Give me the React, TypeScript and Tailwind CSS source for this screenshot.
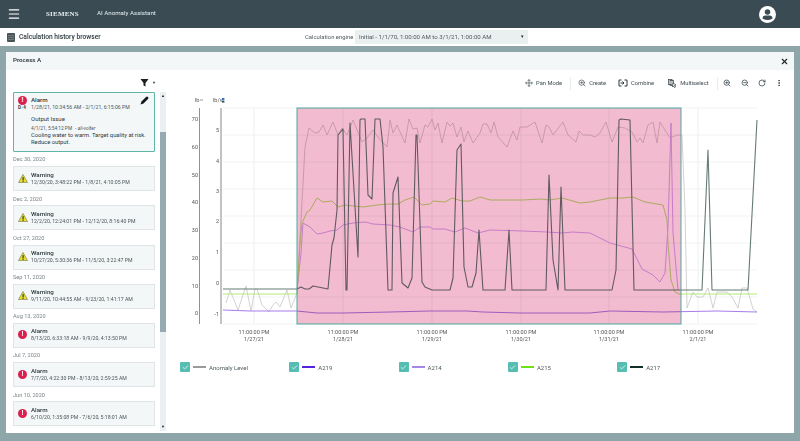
import { Move, ZoomIn, ZoomOut, RotateCw, MoreVertical, X, Check, Menu } from "lucide-react";

// chart points are traced in page coordinates, the svg viewBox is offset to match
const anomaly = "226,303 230,290 238,310 246,286 251,311 255,289 257,289 262,305 269,312 273,305 276,302 280,307 287,290 291,308 297,293 305,147 309,128 315,133 319,132 323,125 327,135 333,122 338,135 342,128 347,135 353,120 362,142 367,138 373,130 378,137 387,147 390,120 393,133 397,125 405,143 409,119 413,129 417,128 420,143 425,125 428,127 432,119 435,130 438,123 442,143 447,122 450,126 453,123 457,137 461,127 464,142 468,131 473,143 480,133 483,124 487,124 491,133 494,122 498,137 507,147 513,131 517,140 520,127 527,127 535,122 542,143 546,125 549,127 553,135 563,122 568,135 576,142 579,131 583,135 590,135 595,137 600,133 606,122 612,142 618,127 625,128 632,132 637,142 640,138 643,143 648,125 653,122 657,143 660,122 665,130 670,138 677,135 682,135 685,210 687,308 693,292 697,297 703,297 708,288 713,308 717,292 727,292 732,297 738,308 742,288 747,288 753,309 757,312";
const a215 = "223,294 297,294 300,243 302,223 307,212 310,210 317,198 323,202 332,201 338,207 345,205 363,207 377,205 390,204 398,204 405,200 414,197 422,205 430,204 433,201 445,202 452,198 462,201 470,201 480,197 490,200 523,200 540,199 550,200 562,198 580,203 590,202 600,200 610,198 623,198 633,197 645,202 663,205 667,220 668,243 671,280 675,292 679,294 757,294";
const a217 = "223,289 297,289 301,287 305,289 309,289 313,286 318,287 328,289 332,245 334,238 337,210 338,135 343,129 346,290 347,290 350,123 358,257 360,120 361,119 365,119 368,195 372,199 375,119 380,119 383,147 388,290 392,290 393,193 398,177 402,283 408,288 412,278 416,135 417,135 422,282 425,287 432,290 450,290 453,278 457,150 461,144 464,267 468,287 472,287 476,273 479,230 483,290 505,290 509,230 512,290 546,290 549,175 553,260 558,290 561,187 565,290 612,290 616,270 619,120 621,119 630,120 634,290 702,290 708,150 712,290 748,290 757,120";
const a214 = "297,290 301,253 303,223 310,227 317,234 323,233 330,231 337,230 343,225 353,223 365,222 373,224 390,225 400,227 413,232 420,227 430,227 433,229 445,229 455,232 465,228 478,233 490,230 523,231 547,232 563,233 572,232 590,233 600,238 610,243 632,249 642,269 653,275 660,282 665,273 668,227 671,123 673,233 678,290";
const a219 = "223,310 250,311 297,311 317,313 343,313 390,312 430,311 467,311 483,312 520,313 590,313 610,311 663,312 717,311 757,312";

const leftTicks: [string, number][] = [["70", 119], ["60", 147], ["50", 175], ["40", 202], ["30", 230], ["20", 258], ["10", 286], ["0", 313]];
const rightTicks: [string, number][] = [["5", 130], ["4", 161], ["3", 191], ["2", 221], ["1", 252], ["0", 283], ["-1", 314]];
const gridY = [108, 135, 162, 189, 216, 243, 270, 297, 324];
const days: [number, string][] = [[254, "1/27/21"], [343, "1/28/21"], [432, "1/29/21"], [521, "1/30/21"], [609, "1/31/21"], [698, "2/1/21"]];

const events = [
  { date: "Dec 30, 2020", kind: "Warning", range: "12/30/20, 3:48:22 PM - 1/8/21, 4:10:05 PM" },
  { date: "Dec 2, 2020", kind: "Warning", range: "12/2/20, 12:24:01 PM - 12/12/20, 8:16:40 PM" },
  { date: "Oct 27, 2020", kind: "Warning", range: "10/27/20, 5:30:36 PM - 11/5/20, 3:22:47 PM" },
  { date: "Sep 11, 2020", kind: "Warning", range: "9/11/20, 10:44:55 AM - 9/23/20, 1:41:17 AM" },
  { date: "Aug 13, 2020", kind: "Alarm", range: "8/13/20, 6:33:18 AM - 9/9/20, 4:13:50 PM" },
  { date: "Jul 7, 2020", kind: "Alarm", range: "7/7/20, 4:22:30 PM - 8/13/20, 2:59:25 AM" },
  { date: "Jun 10, 2020", kind: "Alarm", range: "6/10/20, 1:35:08 PM - 7/6/20, 5:18:01 AM" },
];

const legend = [
  { name: "Anomaly Level", color: "bg-[#9a9a9a]" },
  { name: "A219", color: "bg-[#5522dd]" },
  { name: "A214", color: "bg-[#a488e8]" },
  { name: "A215", color: "bg-[#6fe011]" },
  { name: "A217", color: "bg-[#123029]" },
];

function AlarmIcon() {
  return (
    <div className="flex h-[9px] w-[9px] items-center justify-center rounded-full bg-[#d9204f] text-[7px] leading-none font-bold text-white">
      !
    </div>
  );
}

function WarningIcon() {
  return (
    <svg width="10" height="9" viewBox="0 0 22 20">
      <path d="M11 1 L21 19 L1 19 Z" fill="#e8e030" stroke="#4a4a28" strokeWidth="1" />
      <rect x="10" y="7" width="2.4" height="7" fill="#222" />
      <rect x="10" y="15" width="2.4" height="2.4" fill="#222" />
    </svg>
  );
}

function Chart() {
  const line = (pts: string, color: string, w: number) => (
    <polyline points={pts} fill="none" stroke={color} strokeWidth={w} strokeLinejoin="round" />
  );
  return (
    <svg width="600" height="253" viewBox="170 92 600 253" className="shrink-0">
      {gridY.map((y) => (
        <line key={y} x1="223" x2="757" y1={y} y2={y} stroke="#edf1f1" strokeWidth="0.8" />
      ))}
      {days.map(([x]) => (
        <line key={x} x1={x} x2={x} y1="108" y2="324" stroke="#e9eeee" strokeWidth="0.8" />
      ))}
      {line(anomaly, "#c6c6c6", 0.8)}
      {line(a219, "#a87cec", 1)}
      {line(a214, "#d0aaf6", 1)}
      {line(a215, "#b4e874", 1)}
      {line(a217, "#667a78", 1.1)}
      <rect x="297" y="108" width="384" height="216" fill="#f3bbcf" className="mix-blend-multiply" />
      <rect x="297" y="108" width="384" height="216" fill="none" stroke="#4fa9a0" strokeWidth="1" />
      <line x1="199.5" x2="199.5" y1="108" y2="324" stroke="#707878" strokeWidth="0.8" />
      <line x1="221" x2="221" y1="108" y2="324" stroke="#808888" strokeWidth="1" />
      <g fontSize="5.5" fill="#555" fontFamily="Roboto, sans-serif">
        <text x="195" y="102">lb~</text>
        <text x="213" y="102">lb/v</text>
        {leftTicks.map(([t, y]) => (
          <text key={t} x="198" y={y + 2} textAnchor="end">{t}</text>
        ))}
        {rightTicks.map(([t, y]) => (
          <text key={t} x="219" y={y + 2} textAnchor="end">{t}</text>
        ))}
        {days.map(([x, d]) => (
          <g key={x}>
            <text x={x} y="334" textAnchor="middle">11:00:00 PM</text>
            <text x={x} y="340.5" textAnchor="middle">{d}</text>
          </g>
        ))}
      </g>
      <rect x="222" y="98" width="2.4" height="2" fill="#2f6fd0" />
      <rect x="222" y="100.6" width="2.4" height="2" fill="#3c4c50" />
    </svg>
  );
}

function ToolButton({ icon, label }: { icon: React.ReactNode; label: string }) {
  return (
    <div className="flex items-center gap-[3px] text-[5.8px] whitespace-nowrap text-[#3e4c50]">
      {icon}
      <span>{label}</span>
    </div>
  );
}

export default function App() {
  return (
    <div className="flex h-[441px] w-[800px] flex-col overflow-hidden bg-[#8ea5aa] font-['Roboto',sans-serif] text-[#2d3a3e]">
      <header className="flex h-[28px] shrink-0 items-center bg-[#3a4b54] pr-[24px] pl-[7px] text-white">
        <Menu size={14} strokeWidth={2} />
        <span className="ml-[25px] font-['Liberation_Serif',serif] text-[7px] font-bold tracking-[0.2px] text-[#e4eef0]">SIEMENS</span>
        <span className="ml-[18px] text-[6.2px] text-[#e4eef0]">AI Anomaly Assistant</span>
        <svg className="ml-auto" width="17" height="17" viewBox="0 0 34 34">
          <circle cx="17" cy="17" r="17" fill="#fff" />
          <circle cx="17" cy="12" r="5.5" fill="#3a4b54" />
          <path d="M7 25 Q7 19 13 19 H21 Q27 19 27 25 Q17 31 7 25 Z" fill="#3a4b54" />
        </svg>
      </header>

      <div className="flex h-[18px] shrink-0 items-center bg-white pl-[7px]">
        <svg width="8" height="9" viewBox="0 0 8 9">
          <rect width="8" height="9" rx="1" fill="#4a5558" />
          <rect x="1" y="2" width="6" height="0.6" fill="#8a9498" />
          <rect x="1" y="4" width="6" height="0.6" fill="#8a9498" />
          <rect x="1" y="6" width="6" height="0.6" fill="#8a9498" />
        </svg>
        <span className="ml-[4px] w-[80px] text-[6.7px] font-medium whitespace-nowrap">Calculation history browser</span>
        <span className="ml-[206px] w-[48px] text-[5.9px] whitespace-nowrap text-[#4d5a5e]">Calculation engine</span>
        <div className="ml-[2px] flex h-[14px] w-[173px] items-center justify-between bg-[#eaf0f0] pr-[4px] pl-[4px] text-[6.1px] text-[#4d5a5e]">
          <span>Initial - 1/1/70, 1:00:00 AM to 3/1/21, 1:00:00 AM</span>
          <span className="text-[5px] text-[#222]">▾</span>
        </div>
      </div>

      <main className="mx-[6px] mt-[6px] flex h-[381px] flex-col bg-white">
        <div className="flex h-[18px] shrink-0 items-center justify-between bg-[#f3f7f8] pr-[5px] pl-[7px]">
          <span className="text-[6.2px] font-semibold">Process A</span>
          <X size={9} strokeWidth={3} className="text-[#1d2528]" />
        </div>

        <div className="flex min-h-0 flex-1">
          <aside className="flex w-[164px] shrink-0 flex-col pl-[7px]">
            <div className="flex h-[22px] shrink-0 items-center pt-[3px] pl-[127px]">
              <svg width="9" height="9" viewBox="0 0 18 18">
                <path d="M1 2 H17 L11 10 V17 L7 15 V10 Z" fill="#1c2224" />
              </svg>
              <span className="ml-[3px] text-[4px]">▼</span>
            </div>
            <div className="flex min-h-0">
              <div className="w-[142px] shrink-0">
                <div className="relative h-[60px] rounded-[1px] border border-[#5db5a6] bg-[#f4f7f8] pt-[3px] pl-[4px]">
                  <div className="flex">
                    <div className="flex w-[13px] shrink-0 flex-col">
                      <AlarmIcon />
                      <span className="mt-[1px] text-[4.5px] leading-none font-bold">D↑4</span>
                    </div>
                    <div>
                      <div className="text-[6.2px] leading-[8px] font-medium">Alarm</div>
                      <div className="text-[5.2px] leading-[6px] text-[#4a565a]">1/28/21, 10:34:56 AM - 2/1/21, 6:15:06 PM</div>
                      <div className="mt-[5px] text-[6px] leading-[7px]">Output Issue</div>
                      <div className="mt-[4px] text-[4.8px] leading-[6px] text-[#4a565a]">
                        4/1/21, 5:54:12 PM <span className="ml-[2px] italic">- ali-volter</span>
                      </div>
                      <div className="w-[122px] text-[5.8px] leading-[7px]">
                        Cooling water to warm. Target quality at risk. Reduce output.
                      </div>
                    </div>
                  </div>
                  <svg className="absolute top-[3px] right-[5px]" width="9" height="9" viewBox="0 0 18 18">
                    <path d="M1 17 L3 11 L12 2 Q14 0 16 2 Q18 4 16 6 L7 15 Z" fill="#15191b" />
                  </svg>
                </div>
                {events.map((e) => (
                  <div key={e.date}>
                    <div className="flex h-[14.2px] items-center pt-[1px] text-[5.6px] text-[#7b868a]">{e.date}</div>
                    <div className="flex h-[25px] items-center border border-[#dfe5e6] bg-[#f4f7f8] pb-[1px] pl-[4px]">
                      <div className="flex w-[13px] shrink-0">
                        {e.kind === "Alarm" ? <AlarmIcon /> : <WarningIcon />}
                      </div>
                      <div>
                        <div className="text-[6.2px] leading-[8px] font-medium">{e.kind}</div>
                        <div className="text-[5.2px] leading-[7px] text-[#4a565a]">{e.range}</div>
                      </div>
                    </div>
                  </div>
                ))}
              </div>
              <div className="ml-[5px] flex h-[339px] w-[6px] shrink-0 flex-col bg-[#eaf0f1] text-center text-[4px] leading-[8px] text-[#222]">
                <span className="h-[40px]">▲</span>
                <div className="h-[200px] bg-[#96abb0]" />
                <span className="mt-auto">▼</span>
              </div>
            </div>
          </aside>

          <section className="flex min-w-0 flex-1 flex-col">
            <div className="flex h-[22px] shrink-0 items-center pt-[4px] pl-[355px] text-[#3e4c50]">
              <ToolButton icon={<Move size={8} />} label="Pan Mode" />
              <div className="mr-[7px] ml-[8px] h-[13px] w-px bg-[#e8ecec]" />
              <ToolButton icon={<ZoomIn size={8} />} label="Create" />
              <div className="ml-[12px]">
                <ToolButton
                  icon={
                    <svg width="10" height="8" viewBox="0 0 20 16" fill="none" stroke="#2e3a3e" strokeWidth="2">
                      <path d="M7 2 H2 V14 H7 M13 2 H18 V14 H13 M5 8 H11 M9 5 L12 8 L9 11" />
                    </svg>
                  }
                  label="Combine"
                />
              </div>
              <div className="ml-[14px]">
                <ToolButton
                  icon={
                    <svg width="9" height="9" viewBox="0 0 18 18" fill="none" stroke="#2e3a3e" strokeWidth="1.4">
                      <rect x="1" y="1" width="7" height="10" />
                      <rect x="4" y="3" width="7" height="10" />
                      <path d="M10 8 L16 12 L13 13 L15 16 L13 17 L11 14 L9 16 Z" fill="#fff" />
                    </svg>
                  }
                  label="Multiselect"
                />
              </div>
              <div className="mr-[5px] ml-[8px] h-[13px] w-px bg-[#e8ecec]" />
              <ZoomIn size={8} strokeWidth={2.4} />
              <ZoomOut size={8} strokeWidth={2.4} className="ml-[10px]" />
              <RotateCw size={8} strokeWidth={2.4} className="ml-[9px]" />
              <MoreVertical size={8} strokeWidth={3} className="ml-[9px]" />
            </div>
            <Chart />
            <div className="mt-[17px] flex pl-[10px]">
              {legend.map((l) => (
                <div key={l.name} className="flex w-[109.3px] items-center text-[6px] text-[#4d5a5e]">
                  <div className="flex h-[10px] w-[10px] items-center justify-center rounded-[1px] bg-[#55bdb2]">
                    <Check size={7} strokeWidth={2.5} className="text-white" />
                  </div>
                  <div className={`ml-[3px] h-[1.5px] w-[13px] ${l.color}`} />
                  <span className="ml-[3px]">{l.name}</span>
                </div>
              ))}
            </div>
          </section>
        </div>
      </main>
    </div>
  );
}
